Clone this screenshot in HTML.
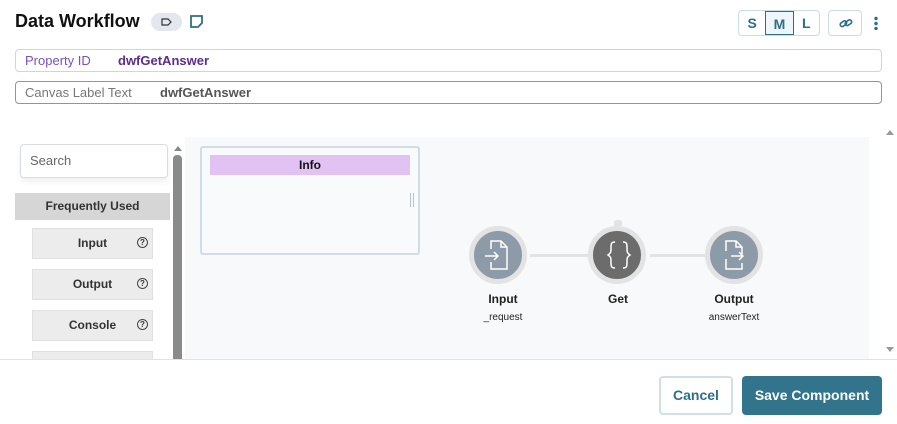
<!DOCTYPE html>
<html><head><style>
*{box-sizing:border-box;margin:0;padding:0}
body{width:897px;height:424px;overflow:hidden;background:#fff;font-family:"Liberation Sans",sans-serif;position:relative}
.abs{position:absolute}
.field{position:absolute;left:15px;width:867px;height:23px;border-radius:4px;font-size:13px;line-height:21px}
.item{position:absolute;left:18px;width:121px;height:31px;background:#ececec;border:1px solid #e0e0e0;font-size:12px;font-weight:bold;color:#333;line-height:29px;text-align:center}
.item .q{position:absolute;right:4px;top:8px;width:11px;height:11px;border:1.3px solid #444;border-radius:50%;font-size:8px;line-height:9px;text-align:center}
.node{position:absolute;width:58px;height:58px;border-radius:50%;border:5px solid #e3e3e3}
.lbl{position:absolute;width:100px;text-align:center;font-size:12px;font-weight:bold;color:#222}
.sub{position:absolute;width:100px;text-align:center;font-size:10px;color:#222}
</style></head><body>
<div class="abs" style="left:15px;top:11px;font-size:18px;font-weight:bold;color:#111">Data Workflow</div>
<div class="abs" style="left:151px;top:13px;width:31px;height:18px;border-radius:9px;background:#e2e8ee"><svg width="31" height="18"><path d="M11 6h6l3 3-3 3h-6z" fill="none" stroke="#333" stroke-width="1.2"/></svg></div>
<svg class="abs" style="left:189px;top:14px" width="16" height="16"><path d="M2 2h11v7l-4 4H2z" fill="none" stroke="#2e6f88" stroke-width="1.8"/></svg>
<div class="abs" style="left:738px;top:10px;width:82px;height:26px;border:1px solid #c9dde4;border-radius:4px;display:flex;font-size:14px;font-weight:bold;color:#2e6f88">
<div style="width:27px;text-align:center;line-height:24px">S</div>
<div style="width:29px;text-align:center;line-height:24px;background:#eef6f9;border:1.5px solid #2e6f88">M</div>
<div style="width:26px;text-align:center;line-height:24px">L</div></div>
<div class="abs" style="left:828px;top:10px;width:34px;height:26px;border:1px solid #c9dde4;border-radius:4px"><svg width="34" height="26"><g fill="none" stroke="#2e6f88" stroke-width="1.6"><rect x="11" y="11" width="7" height="4" rx="2" transform="rotate(-35 14 13)"/><rect x="16" y="10" width="7" height="4" rx="2" transform="rotate(-35 19 12)"/></g></svg></div>
<div class="abs" style="left:874px;top:16px;width:4px;height:14px;background:radial-gradient(circle,#2e6f88 1.5px,transparent 2px) 0 0/4px 5px"></div>
<div class="field" style="top:49px;border:1px solid #e2c6f3"><span style="position:absolute;left:9px;color:#7b4fc2">Property ID</span><span style="position:absolute;left:102px;color:#5a2e8a;font-weight:bold">dwfGetAnswer</span></div>
<div class="field" style="top:81px;border:1px solid #8a96a3"><span style="position:absolute;left:9px;color:#777">Canvas Label Text</span><span style="position:absolute;left:144px;color:#555;font-weight:bold">dwfGetAnswer</span></div>
<div class="abs" style="left:14px;top:137px;width:855px;height:222px;background:#f7f9fb;overflow:hidden">
<div class="abs" style="left:0;top:0;width:171px;height:222px;background:#fff"></div>
<div class="abs" style="left:6px;top:7px;width:148px;height:34px;border:1px solid #d8dde3;border-radius:4px;font-size:13px;color:#666;line-height:32px;padding-left:9px;background:#fff;box-shadow:0 4px 6px rgba(0,0,0,.06)">Search</div>
<div class="abs" style="left:1px;top:56px;width:155px;height:27px;background:#d6d6d6;font-size:12px;font-weight:bold;color:#333;text-align:center;line-height:27px">Frequently Used</div>
<div class="item" style="top:91px">Input<span class="q">?</span></div>
<div class="item" style="top:132px">Output<span class="q">?</span></div>
<div class="item" style="top:173px">Console<span class="q">?</span></div>
<div class="item" style="top:214px"></div>
<div class="abs" style="left:159px;top:18px;width:9px;height:210px;background:#8a8a8a;border-radius:4px 4px 0 0"></div>
<div class="abs" style="left:160px;top:5px;width:0;height:0;border:4px solid transparent;border-bottom:5px solid #888"></div>
</div>
<div class="abs" style="left:200px;top:146px;width:220px;height:109px;border:2px solid #d0dce6;border-radius:3px;background:#f8fafc"></div>
<div class="abs" style="left:210px;top:155px;width:200px;height:20px;background:#e2c1f3;font-size:12px;font-weight:bold;text-align:center;line-height:20px;color:#111">Info</div>
<div class="abs" style="left:410px;top:193px;width:4px;height:14px;border-left:1px solid #a9c8e8;border-right:1px solid #a9c8e8"></div>
<div class="abs" style="left:530px;top:254px;width:60px;height:3px;background:#e3e3e3"></div>
<div class="abs" style="left:650px;top:254px;width:60px;height:3px;background:#e3e3e3"></div>
<div class="abs" style="left:614px;top:220px;width:8px;height:6px;background:#e3e3e3;border-radius:3px 3px 0 0"></div>
<div class="node" style="left:469px;top:226px;background:#8d9ba8"></div>
<div class="node" style="left:588px;top:226px;background:#6c6c6c"></div>
<div class="node" style="left:705px;top:226px;background:#8d9ba8"></div>
<svg class="abs" style="left:469px;top:226px" width="300" height="58"><g fill="none" stroke="#fff" stroke-width="1.5"><path d="M22 23v-8h10l6 6v22H22v-7M32 15v6h6M16 30h12M25 26l4 4-4 4"/><path d="M146 16c-4 0-4 2-4 6s0 5-3 7c3 2 3 3 3 7s0 6 4 6M154 16c4 0 4 2 4 6s0 5 3 7c-3 2-3 3-3 7s0 6-4 6"/><path d="M257 25v-10h10l6 6v7M257 33v10h16v-6M267 15v6h6M262 30h12M270 26l4 4-4 4"/></g></svg>
<div class="lbl" style="left:453px;top:292px">Input</div><div class="sub" style="left:453px;top:312px">_request</div>
<div class="lbl" style="left:568px;top:292px">Get</div>
<div class="lbl" style="left:684px;top:292px">Output</div><div class="sub" style="left:684px;top:312px">answerText</div>
<div class="abs" style="left:886px;top:126px;width:0;height:0;border:4px solid transparent;border-bottom:5px solid #999"></div>
<div class="abs" style="left:886px;top:347px;width:0;height:0;border:4px solid transparent;border-top:5px solid #999"></div>
<div class="abs" style="left:0;top:359px;width:897px;height:1px;background:#dde3e8"></div>
<div class="abs" style="left:659px;top:376px;width:74px;height:39px;border:2px solid #cfe0e6;border-radius:4px;font-size:14px;font-weight:bold;color:#2e6f88;text-align:center;line-height:35px">Cancel</div>
<div class="abs" style="left:742px;top:376px;width:140px;height:39px;background:#31748b;border-radius:4px;font-size:14px;font-weight:bold;color:#fff;text-align:center;line-height:39px">Save Component</div>
</body></html>
